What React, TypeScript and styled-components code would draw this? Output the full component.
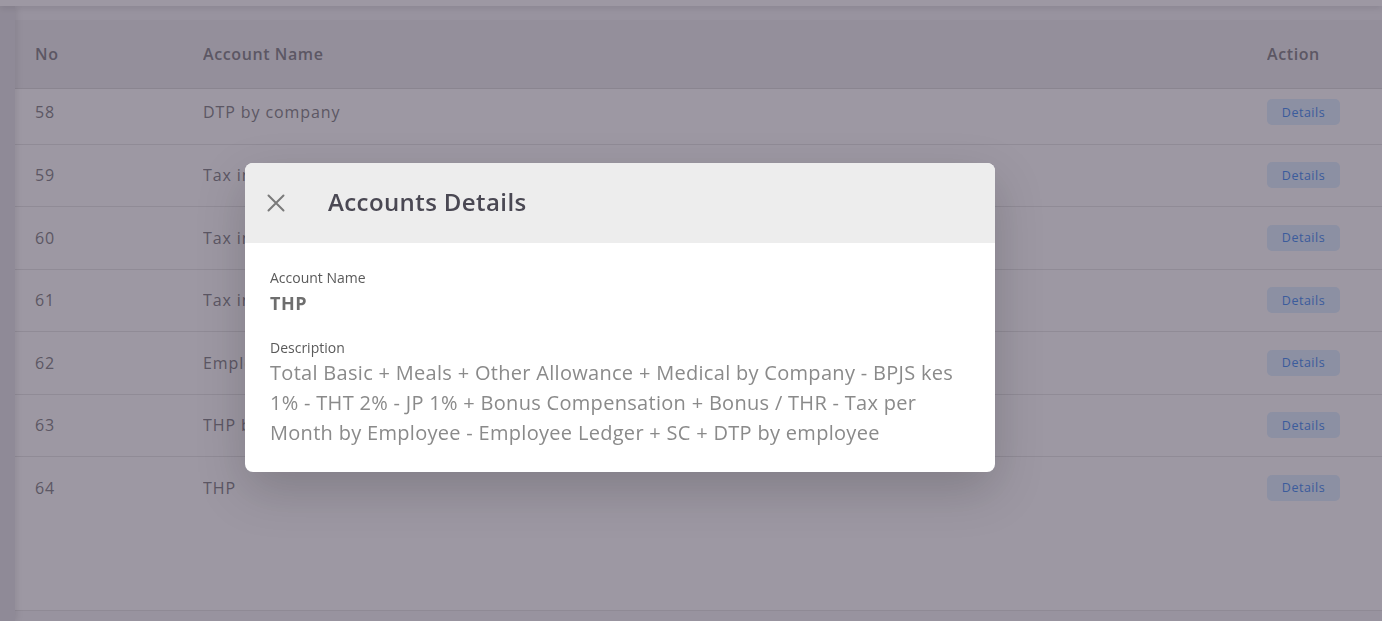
import styled, { createGlobalStyle } from 'styled-components';

const GlobalStyle = createGlobalStyle`
  html, body {
    margin: 0;
    padding: 0;
    height: 100%;
    overflow: hidden;
  }
  body {
    font-family: "Open Sans", "Noto Sans", sans-serif;
    background: #f4f4f6;
  }
`;

const rows = [
  { no: 58, name: 'DTP by company' },
  { no: 59, name: 'Tax in company' },
  { no: 60, name: 'Tax in employee' },
  { no: 61, name: 'Tax in month' },
  { no: 62, name: 'Employee Ledger' },
  { no: 63, name: 'THP by employee' },
  { no: 64, name: 'THP' },
];

const Page = styled.div`
  display: flex;
  flex-direction: column;
  height: 621px;
`;

const TopBar = styled.div`
  height: 6px;
  background: #ffffff;
  box-shadow: 0 2px 6px rgba(0, 0, 0, 0.12);
  position: relative;
  z-index: 2;
`;

const Layout = styled.div`
  display: flex;
  flex: 1;
  min-height: 0;
`;

const Sidebar = styled.aside`
  width: 15px;
  flex-shrink: 0;
  background: #e3e3e6;
  box-shadow: 2px 0 6px rgba(0, 0, 0, 0.1);
  position: relative;
  z-index: 1;
`;

const Content = styled.main`
  flex: 1;
  padding-top: 14px;
  display: flex;
  flex-direction: column;
`;

const Card = styled.div`
  background: #ffffff;
  height: 590px;
  border-bottom: 1px solid #e2e2e2;
  display: flex;
  flex-direction: column;
`;

const Row = styled.div<{ $head?: boolean; $first?: boolean; $last?: boolean }>`
  display: grid;
  grid-template-columns: 168px 1fr 115px;
  align-items: center;
  height: ${(p) => (p.$head ? 69 : p.$first ? 55.5 : 62.5)}px;
  padding: 0 0 ${(p) => (p.$first ? 8 : 0)}px 20px;
  box-sizing: border-box;
  border-bottom: 1px solid ${(p) => (p.$last ? 'transparent' : p.$head ? '#d9d9d9' : '#e4e4e4')};
  background: ${(p) => (p.$head ? '#ececee' : '#ffffff')};
  color: #7c7c80;
  font-size: 16px;
  letter-spacing: ${(p) => (p.$head ? 0.6 : 0.9)}px;
  font-weight: ${(p) => (p.$head ? 600 : 400)};
`;

const Cell = styled.div`
  white-space: nowrap;
  overflow: hidden;
`;

const DetailsButton = styled.button`
  width: 73px;
  height: 26px;
  border: none;
  border-radius: 5px;
  background: #dceeff;
  color: #3a86f0;
  font-family: "Open Sans", "Noto Sans", sans-serif;
  font-size: 12.5px;
  letter-spacing: 0.5px;
  cursor: pointer;
`;

const Overlay = styled.div`
  position: fixed;
  inset: 0;
  background: rgba(60, 50, 72, 0.5);
  z-index: 10;
  display: flex;
  align-items: flex-start;
  padding: 163px 0 0 245px;
`;

const Modal = styled.div`
  width: 750px;
  background: #ffffff;
  border-radius: 8px;
  overflow: hidden;
  box-shadow: 0 18px 50px rgba(0, 0, 0, 0.18);
`;

const ModalHeader = styled.div`
  height: 80px;
  background: #ededed;
  display: flex;
  align-items: center;
  padding-left: 21px;
  gap: 42px;
`;

const CloseButton = styled.button`
  width: 20px;
  height: 20px;
  padding: 0;
  border: none;
  background: none;
  display: flex;
  align-items: center;
  justify-content: center;
  cursor: pointer;
`;

const ModalTitle = styled.h2`
  margin: 0 0 3px;
  font-size: 24px;
  font-weight: 600;
  letter-spacing: 0.4px;
  color: #4a4853;
`;

const ModalBody = styled.div`
  padding: 25px 25px 24px;
  display: flex;
  flex-direction: column;
  gap: 22px;
`;

const Field = styled.div`
  display: flex;
  flex-direction: column;
`;

const Label = styled.span`
  font-size: 14px;
  line-height: 20px;
  color: #5a5a5a;
`;

const Value = styled.span<{ $strong?: boolean }>`
  font-size: ${(p) => (p.$strong ? 18 : 20)}px;
  line-height: ${(p) => (p.$strong ? 26 : 30)}px;
  font-weight: ${(p) => (p.$strong ? 700 : 400)};
  letter-spacing: ${(p) => (p.$strong ? 0.5 : 0.3)}px;
  color: ${(p) => (p.$strong ? '#6e6e6e' : '#8a8a8a')};
  margin-top: ${(p) => (p.$strong ? 2 : 0)}px;
`;

export default function App() {
  return (
    <>
      <GlobalStyle />
      <Page>
        <TopBar />
        <Layout>
          <Sidebar />
          <Content>
            <Card>
              <Row $head>
                <Cell>No</Cell>
                <Cell>Account Name</Cell>
                <Cell>Action</Cell>
              </Row>
              {rows.map((r, i) => (
                <Row key={r.no} $first={i === 0} $last={i === rows.length - 1}>
                  <Cell>{r.no}</Cell>
                  <Cell>{r.name}</Cell>
                  <Cell>
                    <DetailsButton>Details</DetailsButton>
                  </Cell>
                </Row>
              ))}
            </Card>
          </Content>
        </Layout>
      </Page>
      <Overlay>
        <Modal>
          <ModalHeader>
            <CloseButton aria-label="Close">
              <svg width="20" height="20" viewBox="0 0 20 20">
                <path d="M2.5 2.5 L17.5 17.5 M17.5 2.5 L2.5 17.5" stroke="#7a7a7a" strokeWidth="2" strokeLinecap="round" />
              </svg>
            </CloseButton>
            <ModalTitle>Accounts Details</ModalTitle>
          </ModalHeader>
          <ModalBody>
            <Field>
              <Label>Account Name</Label>
              <Value $strong>THP</Value>
            </Field>
            <Field>
              <Label>Description</Label>
              <Value>
                Total Basic + Meals + Other Allowance + Medical by Company - BPJS kes 1% - THT 2% - JP 1% + Bonus
                Compensation + Bonus / THR - Tax per Month by Employee - Employee Ledger + SC + DTP by employee
              </Value>
            </Field>
          </ModalBody>
        </Modal>
      </Overlay>
    </>
  );
}
